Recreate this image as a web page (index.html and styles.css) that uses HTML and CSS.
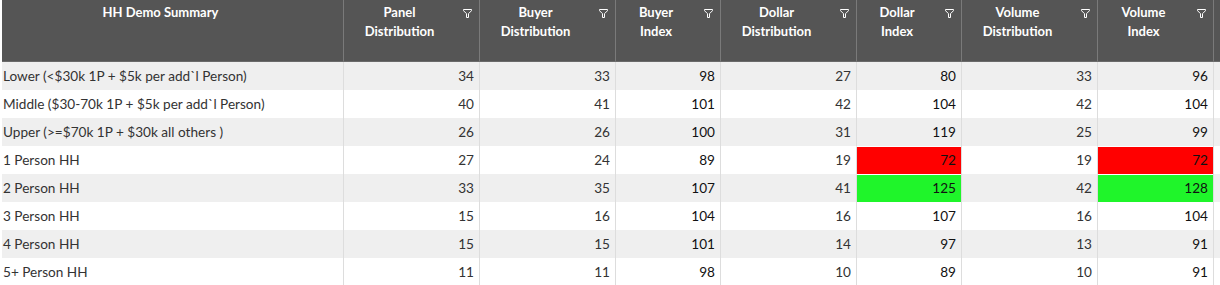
FILE: index.html
```html
<!DOCTYPE html>
<html lang="en">
<head>
    <meta charset="UTF-8">
    <title>HH Demo Summary</title>
    <link rel="stylesheet" href="styles.css">
</head>
<body>
    <div class="grid">
        <!-- header -->
        <div class="th">HH Demo Summary</div>
        <div class="th">Panel<br>Distribution<span class="filter"></span></div>
        <div class="th">Buyer<br>Distribution<span class="filter"></span></div>
        <div class="th">Buyer<br>Index<span class="filter"></span></div>
        <div class="th">Dollar<br>Distribution<span class="filter"></span></div>
        <div class="th">Dollar<br>Index<span class="filter"></span></div>
        <div class="th">Volume<br>Distribution<span class="filter"></span></div>
        <div class="th">Volume<br>Index<span class="filter"></span></div>
        <div class="th"></div>

        <div class="row">
            <div class="td label">Lower (&lt;$30k 1P + $5k per add`l Person)</div>
            <div class="td">34</div><div class="td">33</div><div class="td idx">98</div>
            <div class="td">27</div><div class="td idx">80</div>
            <div class="td">33</div><div class="td idx">96</div><div class="td"></div>
        </div>
        <div class="row">
            <div class="td label">Middle ($30-70k 1P + $5k per add`l Person)</div>
            <div class="td">40</div><div class="td">41</div><div class="td idx">101</div>
            <div class="td">42</div><div class="td idx">104</div>
            <div class="td">42</div><div class="td idx">104</div><div class="td"></div>
        </div>
        <div class="row">
            <div class="td label">Upper (&gt;=$70k 1P + $30k all others )</div>
            <div class="td">26</div><div class="td">26</div><div class="td idx">100</div>
            <div class="td">31</div><div class="td idx">119</div>
            <div class="td">25</div><div class="td idx">99</div><div class="td"></div>
        </div>
        <div class="row">
            <div class="td label">1 Person HH</div>
            <div class="td">27</div><div class="td">24</div><div class="td idx">89</div>
            <div class="td">19</div><div class="td idx low">72</div>
            <div class="td">19</div><div class="td idx low">72</div><div class="td"></div>
        </div>
        <div class="row">
            <div class="td label">2 Person HH</div>
            <div class="td">33</div><div class="td">35</div><div class="td idx">107</div>
            <div class="td">41</div><div class="td idx high">125</div>
            <div class="td">42</div><div class="td idx high">128</div><div class="td"></div>
        </div>
        <div class="row">
            <div class="td label">3 Person HH</div>
            <div class="td">15</div><div class="td">16</div><div class="td idx">104</div>
            <div class="td">16</div><div class="td idx">107</div>
            <div class="td">16</div><div class="td idx">104</div><div class="td"></div>
        </div>
        <div class="row">
            <div class="td label">4 Person HH</div>
            <div class="td">15</div><div class="td">15</div><div class="td idx">101</div>
            <div class="td">14</div><div class="td idx">97</div>
            <div class="td">13</div><div class="td idx">91</div><div class="td"></div>
        </div>
        <div class="row">
            <div class="td label">5+ Person HH</div>
            <div class="td">11</div><div class="td">11</div><div class="td idx">98</div>
            <div class="td">10</div><div class="td idx">89</div>
            <div class="td">10</div><div class="td idx">91</div><div class="td"></div>
        </div>
    </div>
</body>
</html>
```

FILE: styles.css
```css
body {
    margin: 0;
    padding-left: 2px;
    background: #fff;
    font-family: 'Lato', 'Open Sans', sans-serif;
    font-size: 13px;
    color: #333;
}

.grid {
    display: grid;
    grid-template-columns: 341px 136px 136px 105px 136px 105px 136px 116px 1fr;
    grid-auto-rows: 28px;
    grid-template-rows: 62px;
}

/* Header */
.th {
    position: relative;
    background-color: #555555;
    color: #fff;
    font-weight: bold;
    text-align: center;
    line-height: 19px;
    padding: 3px 30px 0 6px;
    border-left: 1px solid #7a7a7a;
    border-bottom: 1px solid #6a6a6a;
}

.th:first-child {
    border-left: none;
}

.filter {
    position: absolute;
    top: 9px;
    right: 7px;
    width: 9px;
    height: 9px;
    background: url("data:image/svg+xml,%3Csvg xmlns='http://www.w3.org/2000/svg' width='9' height='9' viewBox='0 0 9 9'%3E%3Cpath d='M0.5 0.5h8v1.2l-3 3v3.8h-2v-3.8l-3-3z' fill='none' stroke='white' stroke-width='1'/%3E%3C/svg%3E") no-repeat;
}

/* Rows */
.row {
    display: contents;
}

.td {
    border-left: 1px solid #dddddd;
    text-align: right;
    padding-right: 5px;
    font-size: 13.6px;
    line-height: 28px;
    white-space: nowrap;
}

.row:nth-child(even) .td {
    background-color: #efefef;
}

.td.label {
    border-left: none;
    text-align: left;
    padding-left: 1px;
}

.idx {
    color: #111;
}

.low, .row:nth-child(even) .low {
    background-color: #ff0000;
    border-top: 1px solid #fff;
    line-height: 27px;
}

.high, .row:nth-child(even) .high {
    background-color: #1ff52a;
    border-top: 1px solid #fff;
    line-height: 27px;
}
```
